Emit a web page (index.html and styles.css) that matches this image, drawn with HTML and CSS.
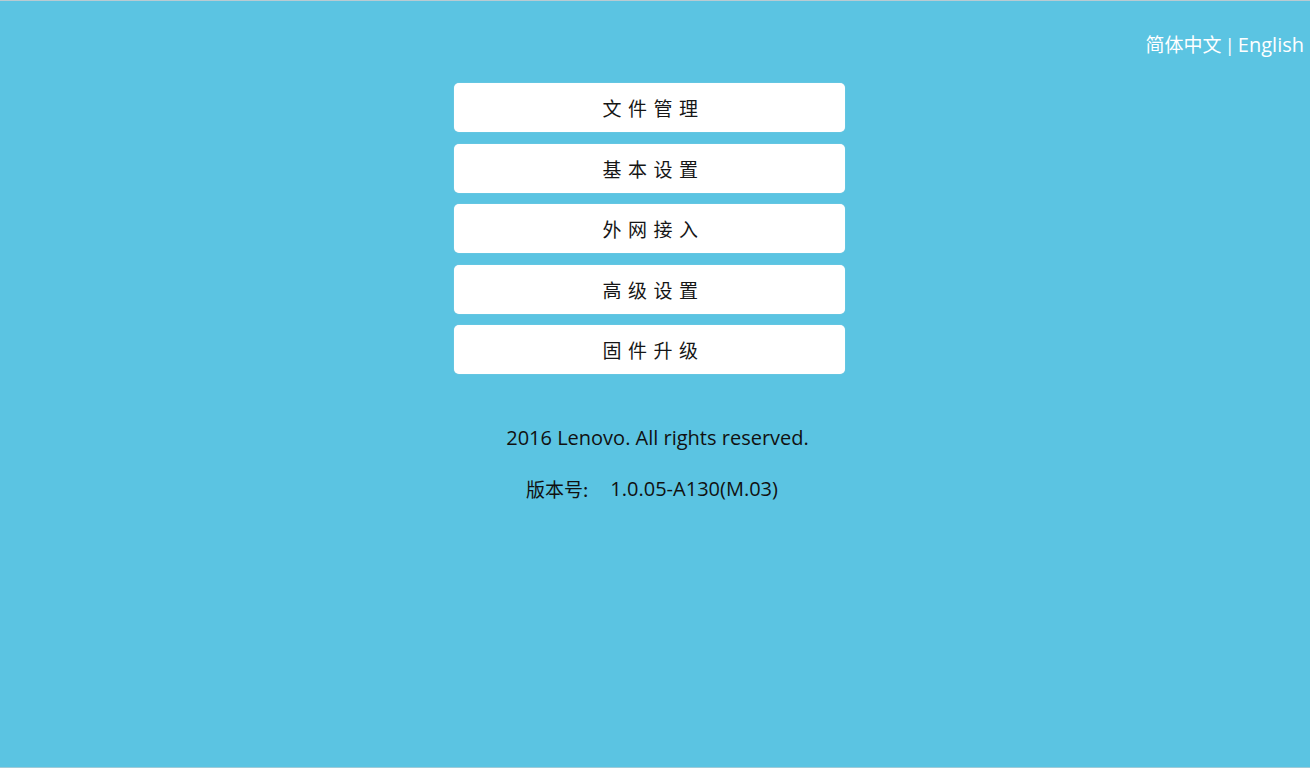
FILE: index.html
```html
<!DOCTYPE html>
<html lang="zh-CN">
<head>
<meta charset="utf-8">
<title>Lenovo</title>
<link rel="stylesheet" href="styles.css">
</head>
<body>
<div class="page">
  <header class="lang">
    <span class="zh">简体中文</span><span class="sep">|</span><span class="en">English</span>
  </header>
  <nav class="menu">
    <a class="btn">文件管理</a>
    <a class="btn">基本设置</a>
    <a class="btn">外网接入</a>
    <a class="btn">高级设置</a>
    <a class="btn">固件升级</a>
  </nav>
  <footer class="foot">
    <p class="copy">2016 Lenovo. All rights reserved.</p>
    <p class="ver"><span class="ver-label">版本号:</span><span>1.0.05-A130(M.03)</span></p>
  </footer>
</div>
</body>
</html>
```
FILE: styles.css
```css
html, body {
  margin: 0;
  padding: 0;
  height: 100%;
}
body {
  background: #5bc4e2;
  font-family: "Open Sans", "Noto Sans CJK SC", sans-serif;
}
.page {
  box-sizing: border-box;
  height: 768px;
  border-top: 1px solid #b9cbd2;
  border-bottom: 1px solid #9fcbd8;
  display: flex;
  flex-direction: column;
}
.lang {
  display: flex;
  justify-content: flex-end;
  align-items: baseline;
  gap: 3px;
  padding: 30px 6px 0 0;
  height: 52px;
  box-sizing: border-box;
  color: #ffffff;
  font-size: 19px;
  line-height: 26px;
}
.lang .zh {
  font-family: "Noto Sans CJK SC", sans-serif;
}
.lang .en {
  font-size: 20px;
}
.menu {
  display: flex;
  flex-direction: column;
  align-items: center;
  gap: 11.5px;
  padding-right: 11px;
  margin-top: 30px;
}
.btn {
  display: flex;
  align-items: center;
  justify-content: center;
  width: 391px;
  height: 49px;
  background: #ffffff;
  border-radius: 5px;
  box-shadow: 0 0 1px rgba(200, 220, 230, 0.9);
  color: #161616;
  font-family: "Noto Sans CJK SC", sans-serif;
  font-size: 19px;
  letter-spacing: 6.5px;
  padding-left: 8px;
  box-sizing: border-box;
}
.foot {
  margin-top: 51px;
  text-align: center;
  color: #111111;
  font-size: 20px;
}
.foot p {
  margin: 0;
  line-height: 26px;
}
.copy {
  padding-left: 5px;
}
.ver {
  margin-top: 25px !important;
  display: flex;
  justify-content: center;
  gap: 22px;
  padding-right: 6px;
}
.ver-label {
  font-family: "Noto Sans CJK SC", sans-serif;
  font-size: 19px;
}
```
